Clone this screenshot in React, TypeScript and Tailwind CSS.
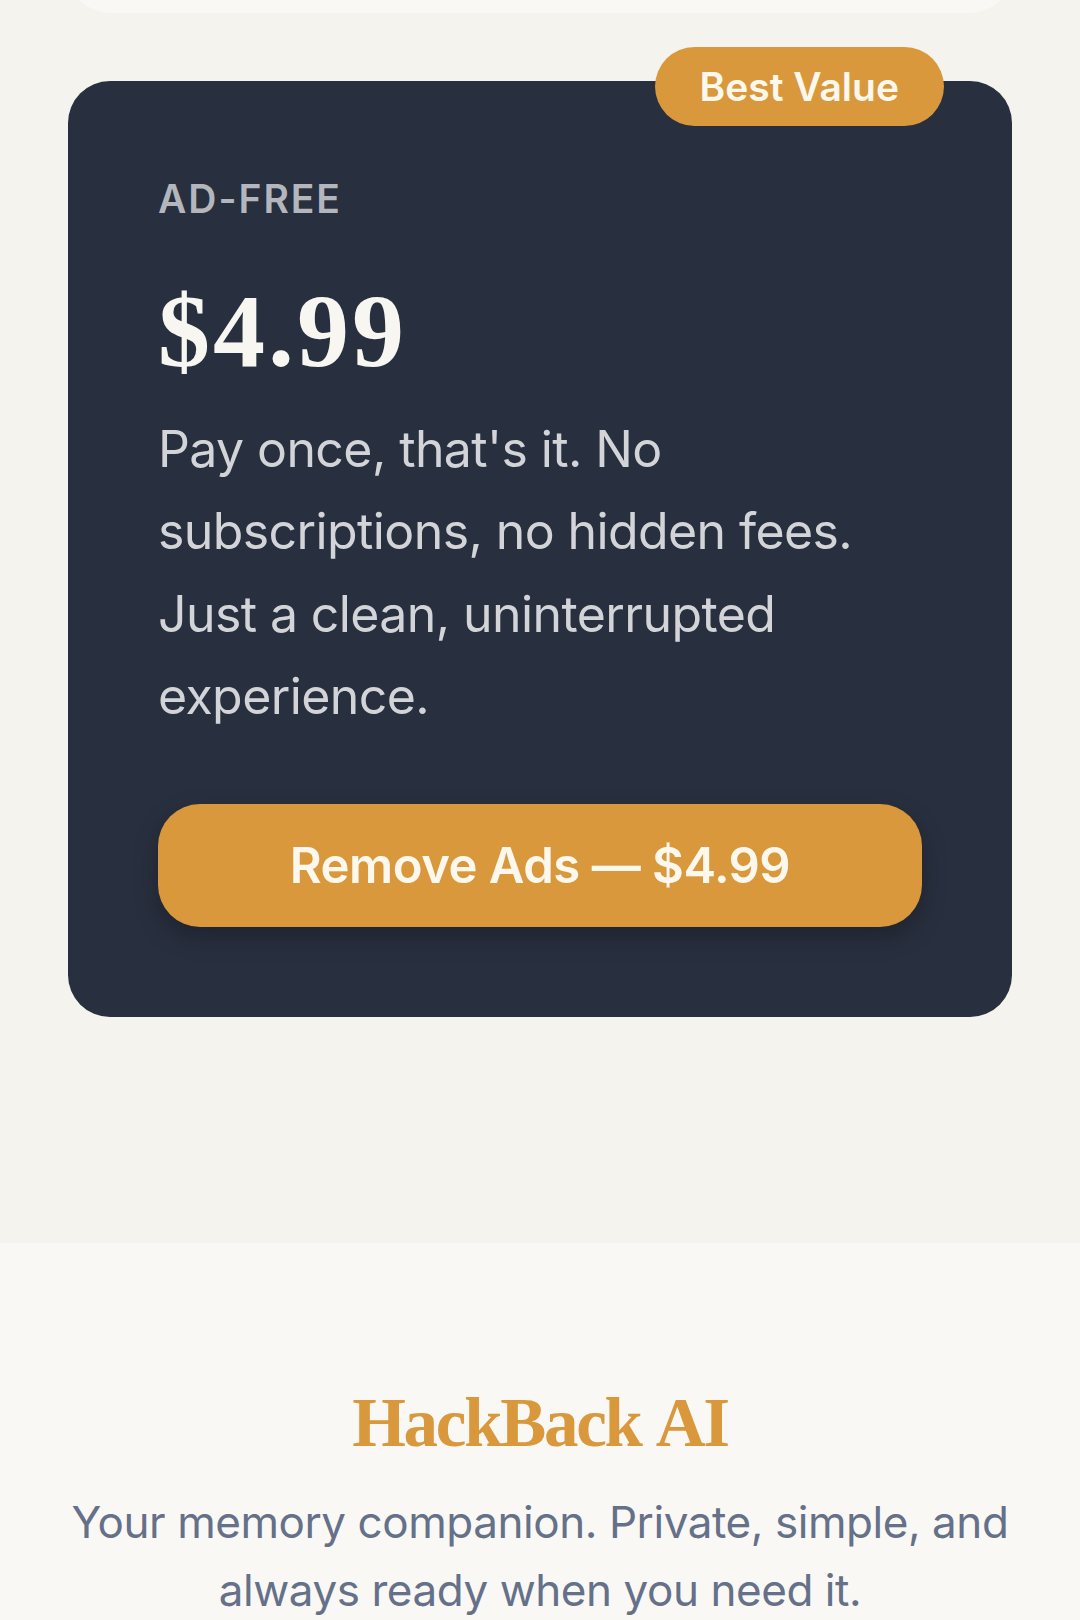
import React from "react";

export default function App() {
  return (
    <div className="min-h-[1620px] w-[1080px] overflow-hidden bg-[#f4f3ee] font-['Inter','Noto_Sans',sans-serif]">
      <div className="px-[68px] pb-[226px]">
        <div className="-mt-[80px] h-[93px] rounded-[42px] bg-[#f9f8f5]" />
        <div className="relative mt-[68px] rounded-[42px] bg-[#282f3e] px-[90px] pt-[90px] pb-[90px]">
          <span className="absolute -top-[34px] right-[68px] flex h-[79px] items-center rounded-full bg-[#d9983b] px-[45px] text-[39px] font-semibold leading-none text-[#fdf8ee]">
            Best Value
          </span>
          <p className="text-[39px] font-semibold uppercase leading-[56px] tracking-[0.05em] text-[#b3b6bc]">
            Ad-Free
          </p>
          <p className="mt-[53px] font-['Liberation_Serif','DejaVu_Serif',serif] text-[104px] font-bold leading-[102px] tracking-[3px] text-[#f8f6f0]">
            $4.99
          </p>
          <p className="mt-[26px] text-[50px] leading-[82.3px] tracking-[-0.012em] text-[#d3d4d8]">
            Pay once, that's it. No subscriptions, no hidden fees. Just a clean, uninterrupted experience.
          </p>
          <button className="mt-[67px] flex h-[123px] w-full items-center justify-center rounded-[42px] bg-[#d9983b] text-[49px] font-semibold tracking-[-0.01em] text-[#fdf8ee] shadow-[0_10px_24px_rgba(0,0,0,0.25)]">
            Remove Ads — $4.99
          </button>
        </div>
      </div>
      <footer className="bg-[#f9f8f5] px-[40px] pt-[138px] pb-[60px] text-center">
        <h2 className="font-['Liberation_Serif','DejaVu_Serif',serif] text-[69px] font-bold leading-[84px] tracking-[-2.3px] [word-spacing:4px] text-[#d9983b]">
          HackBack AI
        </h2>
        <p className="mt-[24px] whitespace-nowrap text-[44px] leading-[67.5px] tracking-[-0.01em] text-[#657089]">
          Your memory companion. Private, simple, and
          <br />
          always ready when you need it.
        </p>
      </footer>
    </div>
  );
}
